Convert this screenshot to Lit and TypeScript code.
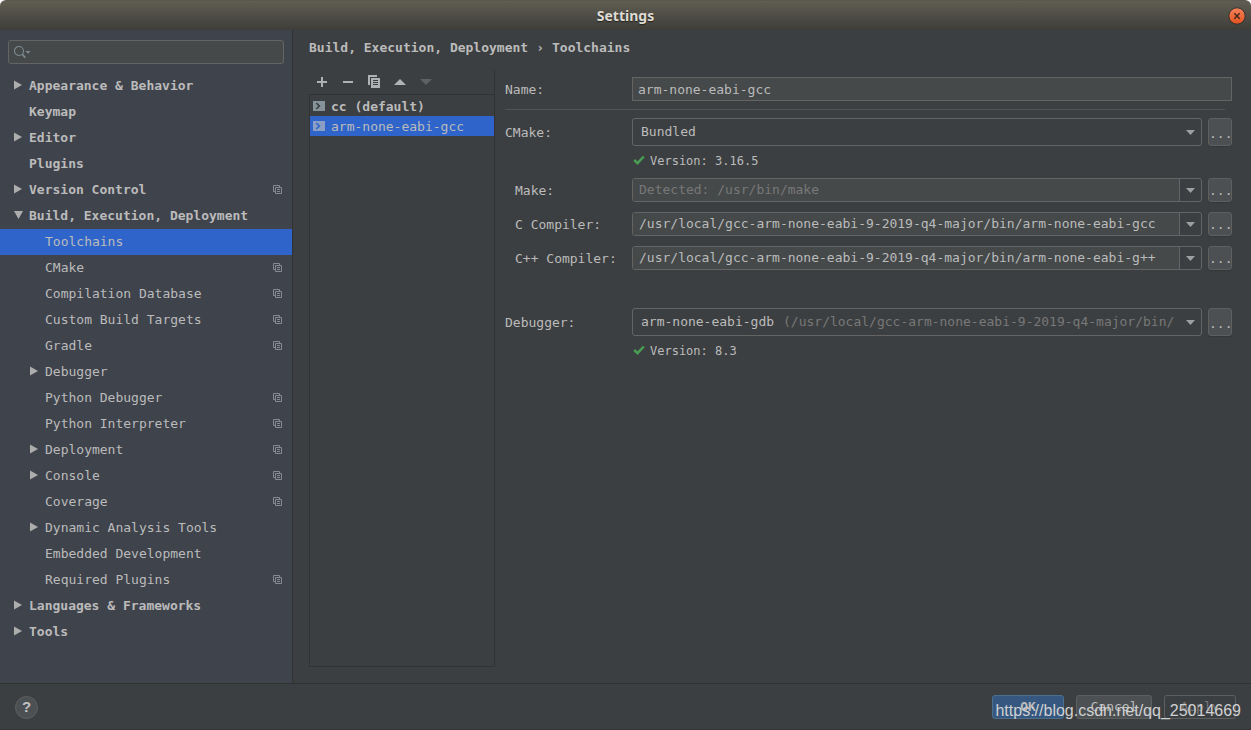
import { LitElement, html, css, svg, nothing } from "lit";
import { customElement, state } from "lit/decorators.js";
import { classMap } from "lit/directives/class-map.js";

interface TreeItem {
  label: string;
  level: 0 | 1;
  arrow?: "right" | "down";
  project?: boolean;
}

const TREE: TreeItem[] = [
  { label: "Appearance & Behavior", level: 0, arrow: "right" },
  { label: "Keymap", level: 0 },
  { label: "Editor", level: 0, arrow: "right" },
  { label: "Plugins", level: 0 },
  { label: "Version Control", level: 0, arrow: "right", project: true },
  { label: "Build, Execution, Deployment", level: 0, arrow: "down" },
  { label: "Toolchains", level: 1 },
  { label: "CMake", level: 1, project: true },
  { label: "Compilation Database", level: 1, project: true },
  { label: "Custom Build Targets", level: 1, project: true },
  { label: "Gradle", level: 1, project: true },
  { label: "Debugger", level: 1, arrow: "right" },
  { label: "Python Debugger", level: 1, project: true },
  { label: "Python Interpreter", level: 1, project: true },
  { label: "Deployment", level: 1, arrow: "right", project: true },
  { label: "Console", level: 1, arrow: "right", project: true },
  { label: "Coverage", level: 1, project: true },
  { label: "Dynamic Analysis Tools", level: 1, arrow: "right" },
  { label: "Embedded Development", level: 1 },
  { label: "Required Plugins", level: 1, project: true },
  { label: "Languages & Frameworks", level: 0, arrow: "right" },
  { label: "Tools", level: 0, arrow: "right" },
];

const icon = (w: number, h: number, body: unknown) =>
  html`<svg width=${w} height=${h} viewBox="0 0 ${w} ${h}" aria-hidden="true">${body}</svg>`;

const searchIcon = icon(17, 14, svg`
  <circle cx="5" cy="6" r="4.5" fill="none" stroke="#7f8b91" stroke-width="1.1"/>
  <path d="M8.200 9.200L11.200 12.600" stroke="#7f8b91" stroke-width="1.600"/>
  <path d="M11.500 6h5l-2.500 2.800z" fill="#7f8b91"/>`);
const arrowRight = icon(10, 10, svg`<path d="M1 0.500v9l8-4.500z" fill="#adadad"/>`);
const arrowDown = icon(10, 10, svg`<path d="M1 1h9L5.500 9z" fill="#adadad"/>`);
const projectIcon = icon(9, 9, svg`
  <path d="M2 6.500H0.500V0.500H6.500V2" fill="none" stroke="#848b94"/>
  <path d="M2.500 2.500h6v6h-6zM4 4.500h3M4 6.500h3" fill="none" stroke="#848b94"/>`);
const addIcon = icon(12, 12, svg`<path d="M6 1v10M1 6h10" stroke="#afb1b3" stroke-width="2"/>`);
const removeIcon = icon(12, 12, svg`<path d="M1 6h10" stroke="#afb1b3" stroke-width="2"/>`);
const copyIcon = icon(12, 14, svg`
  <path d="M0 0h9v2H2v8H0z" fill="#afb1b3"/>
  <path d="M3 3h9v10H3z" fill="#afb1b3"/>
  <path d="M5 5.500h5M5 7.500h5M5 9.500h5" stroke="#3c3f41"/>`);
const upIcon = icon(12, 12, svg`<path d="M0 9h12L6 3z" fill="#afb1b3"/>`);
const downIcon = icon(12, 12, svg`<path d="M0 3h12L6 9z" fill="#5e6163"/>`);
const comboArrow = icon(9, 5, svg`<path d="M0 0h9L4.500 5z" fill="#9da0a3"/>`);
const terminalIcon = (fill: string, mark: string) => icon(12, 10, svg`
  <path d="M0 0h12v10H0z" fill=${fill}/>
  <path d="M3.300 2l3 3-3 3" fill="none" stroke=${mark} stroke-width="1.700"/>`);
const checkIcon = icon(12, 10, svg`
  <path d="M1.200 5l3.300 3.200L10.800 1.500" fill="none" stroke="#499c54" stroke-width="2.500"/>`);
const closeIcon = icon(18, 18, svg`
  <defs><linearGradient id="orb" x1="0" y1="0" x2="0" y2="1">
    <stop offset="0" stop-color="#f6835c"/><stop offset="1" stop-color="#e2511d"/>
  </linearGradient></defs>
  <circle cx="9" cy="9" r="8.200" fill="url(#orb)" stroke="#33322e"/>
  <path d="M6.300 6.300l5.400 5.400M11.700 6.300l-5.400 5.400" stroke="#40261b" stroke-width="1.400"/>`);

@customElement("app-root")
export class AppRoot extends LitElement {
  @state() private page = "Toolchains";
  @state() private toolchain = "arm-none-eabi-gcc";

  static styles = css`
    :host {
      display: flex;
      flex-direction: column;
      height: 100vh;
      box-sizing: border-box;
      overflow: hidden;
      color: #bbbbbb;
      background: #ffffff;
      font: 13px/20px "DejaVu Sans Mono", monospace;
    }
    *, *::before, *::after { box-sizing: border-box; }
    svg { display: block; flex: none; }
    button, input, select { font: inherit; color: inherit; margin: 0; padding: 0; outline: none; }
    button { cursor: pointer; }
    ul { list-style: none; margin: 0; padding: 0; }

    .titlebar {
      display: grid;
      grid-template-columns: 1fr auto 1fr;
      align-items: center;
      flex: none;
      height: 30px;
      padding: 0 5px;
      border-top: 1px solid #5a584e;
      border-radius: 6px 6px 0 0;
      background: linear-gradient(#605e52, #3e3d39);
    }
    .titlebar h1 {
      grid-column: 2;
      margin: 0;
      color: #dfdbd2;
      font: bold 14px/20px "Noto Sans", "Open Sans", sans-serif;
      text-shadow: 0 1px 1px #22221f;
    }
    .close { justify-self: end; border: 0; background: none; }

    .body { display: flex; flex: 1; min-height: 0; background: #3c3f41; }
    .sidebar {
      display: flex;
      flex-direction: column;
      flex: none;
      width: 293px;
      padding-top: 10px;
      gap: 9px;
      border-right: 1px solid #323232;
      background: #3f434c;
    }
    .search {
      display: flex;
      align-items: center;
      gap: 4px;
      height: 24px;
      margin: 0 8px;
      padding: 0 5px;
      border: 1px solid #646464;
      border-radius: 3px;
      background: #45494a;
    }
    .search input { flex: 1; min-width: 0; border: 0; background: none; }
    .node {
      display: flex;
      align-items: center;
      width: 100%;
      height: 26px;
      padding: 0 10px 2px 13px;
      border: 0;
      background: none;
      text-align: left;
      white-space: nowrap;
    }
    .node.child { padding-left: 29px; }
    .node.top { font-weight: bold; }
    .node.selected { background: #2f65ca; }
    .twist { flex: none; width: 16px; }
    .node .text { flex: 1; }
    .node .text, .chain span, .row label, .version span { padding-top: 2px; }

    .content { display: flex; flex-direction: column; flex: 1; min-width: 0; padding: 8px 19px 16px 16px; }
    .crumbs { display: flex; gap: 8px; margin: 0 0 12px; font: inherit; font-weight: bold; }
    .columns { display: flex; flex: 1; gap: 10px; min-height: 0; }
    .chains { display: flex; flex-direction: column; flex: none; width: 186px; border-right: 1px solid #323232; }
    .tools { display: flex; align-items: center; gap: 14px; height: 24px; padding-left: 7px; }
    .tools button { border: 0; background: none; }
    .list { flex: 1; padding-top: 1px; border: 1px solid #323232; border-right: 0; }
    .chain {
      display: flex;
      align-items: center;
      gap: 6px;
      width: 100%;
      height: 20px;
      padding: 0 3px;
      border: 0;
      background: none;
      text-align: left;
    }
    .chain.default { font-weight: bold; }
    .chain.selected { background: #2f65ca; }

    .form { flex: 1; min-width: 0; padding-top: 7px; }
    .row { display: flex; align-items: center; gap: 6px; }
    .row label { flex: none; width: 121px; }
    .row.sub label { padding-left: 10px; }
    .name {
      flex: 1;
      min-width: 0;
      height: 24px;
      padding: 0 5px;
      border: 1px solid #646464;
      background: #45494a;
    }
    .rule { height: 1px; margin: 8px 7px 8px 0; border: 0; background: #515355; }
    .combo {
      display: flex;
      align-items: center;
      flex: 1;
      min-width: 0;
      height: 28px;
      padding: 0 6px 0 8px;
      border: 1px solid #646464;
      border-radius: 3px;
    }
    .combo select { flex: none; appearance: none; border: 0; background: none; }
    .combo .hint { flex: 1; min-width: 0; padding-left: 8px; overflow: hidden; color: #787878; white-space: nowrap; }
    .combo svg { margin-left: 6px; }
    .combo.fill select { flex: 1; }
    .editable {
      display: flex;
      flex: 1;
      min-width: 0;
      height: 24px;
      border: 1px solid #646464;
      border-radius: 3px;
      overflow: hidden;
    }
    .editable input { flex: 1; min-width: 0; padding: 0 6px; border: 0; background: #45494a; }
    .editable input::placeholder { color: #787878; opacity: 1; }
    .editable button {
      display: grid;
      place-items: center;
      width: 22px;
      border: 0;
      border-left: 1px solid #646464;
      background: none;
    }
    .browse {
      flex: none;
      width: 24px;
      height: 24px;
      padding-top: 2px;
      border: 1px solid #5e6060;
      border-radius: 3px;
      background: #4c5052;
      box-shadow: 0 1px 1px #343638;
    }
    .browse.tall { height: 28px; padding-top: 4px; }
    .version {
      display: flex;
      align-items: center;
      gap: 5px;
      height: 20px;
      margin: 4px 0 8px 128px;
      font-size: 12px;
    }
    .sub { margin-bottom: 10px; }
    .debugger { margin-top: 38px; }

    .footer {
      display: flex;
      align-items: center;
      flex: none;
      gap: 12px;
      height: 47px;
      padding: 1px 15px 0;
      border-top: 1px solid #303233;
      border-bottom: 1px solid #323436;
      background: #3c3f41;
      position: relative;
    }
    .help {
      width: 23px;
      height: 23px;
      margin-right: auto;
      border: 1px solid #5e6060;
      border-radius: 50%;
      background: #4c5052;
      color: #bfc1c3;
      font: bold 15px/20px "Liberation Sans", sans-serif;
    }
    .action {
      width: 72px;
      height: 24px;
      border: 1px solid #5e6060;
      border-radius: 3px;
      background: #4c5052;
    }
    .action.wide { width: 76px; }
    .action.primary { border-color: #4c708c; background: #365880; font-weight: bold; }
    .action:disabled { background: none; color: #777777; }
    .watermark {
      position: absolute;
      right: 10px;
      bottom: 8px;
      color: #d0d1d2;
      font: 16px/20px "Liberation Sans", sans-serif;
      pointer-events: none;
    }
  `;

  private renderNode(item: TreeItem) {
    const classes = {
      node: true,
      top: item.level === 0,
      child: item.level === 1,
      selected: item.label === this.page,
    };
    return html`<li>
      <button class=${classMap(classes)} @click=${() => (this.page = item.label)}>
        <span class="twist">${item.arrow === "right" ? arrowRight : item.arrow === "down" ? arrowDown : nothing}</span>
        <span class="text">${item.label}</span>
        ${item.project ? projectIcon : nothing}
      </button>
    </li>`;
  }

  private renderChain(name: string, label: string, isDefault: boolean) {
    const selected = name === this.toolchain;
    return html`<li>
      <button
        class=${classMap({ chain: true, default: isDefault, selected })}
        @click=${() => (this.toolchain = name)}
      >
        ${selected ? terminalIcon("#8b9fc4", "#2f65ca") : terminalIcon("#87939a", "#3c3f41")}
        <span>${label}</span>
      </button>
    </li>`;
  }

  private renderPath(id: string, label: string, value: string, placeholder = "") {
    return html`<div class="row sub">
      <label for=${id}>${label}</label>
      <div class="editable">
        <input id=${id} type="text" .value=${value} placeholder=${placeholder} />
        <button aria-label="Show options">${comboArrow}</button>
      </div>
      <button class="browse" aria-label="Browse">...</button>
    </div>`;
  }

  render() {
    return html`
      <header class="titlebar">
        <h1>Settings</h1>
        <button class="close" aria-label="Close">${closeIcon}</button>
      </header>
      <div class="body">
        <nav class="sidebar">
          <div class="search">${searchIcon}<input type="text" aria-label="Search settings" /></div>
          <ul>${TREE.map((item) => this.renderNode(item))}</ul>
        </nav>
        <main class="content">
          <h2 class="crumbs"><span>Build, Execution, Deployment</span><span>›</span><span>Toolchains</span></h2>
          <div class="columns">
            <section class="chains">
              <div class="tools">
                <button aria-label="Add">${addIcon}</button>
                <button aria-label="Remove">${removeIcon}</button>
                <button aria-label="Copy">${copyIcon}</button>
                <button aria-label="Move up">${upIcon}</button>
                <button aria-label="Move down" disabled>${downIcon}</button>
              </div>
              <ul class="list">
                ${this.renderChain("cc", "cc (default)", true)}
                ${this.renderChain("arm-none-eabi-gcc", "arm-none-eabi-gcc", false)}
              </ul>
            </section>
            <section class="form">
              <div class="row">
                <label for="name">Name:</label>
                <input class="name" id="name" type="text" .value=${this.toolchain} />
              </div>
              <hr class="rule" />
              <div class="row">
                <label for="cmake">CMake:</label>
                <div class="combo fill">
                  <select id="cmake"><option>Bundled</option></select>
                  ${comboArrow}
                </div>
                <button class="browse tall" aria-label="Browse">...</button>
              </div>
              <div class="version">${checkIcon}<span>Version: 3.16.5</span></div>
              ${this.renderPath("make", "Make:", "", "Detected: /usr/bin/make")}
              ${this.renderPath("cc", "C Compiler:", "/usr/local/gcc-arm-none-eabi-9-2019-q4-major/bin/arm-none-eabi-gcc")}
              ${this.renderPath("cxx", "C++ Compiler:", "/usr/local/gcc-arm-none-eabi-9-2019-q4-major/bin/arm-none-eabi-g++")}
              <div class="row debugger">
                <label for="gdb">Debugger:</label>
                <div class="combo">
                  <select id="gdb"><option>arm-none-eabi-gdb</option></select>
                  <span class="hint">(/usr/local/gcc-arm-none-eabi-9-2019-q4-major/bin/</span>
                  ${comboArrow}
                </div>
                <button class="browse tall" aria-label="Browse">...</button>
              </div>
              <div class="version">${checkIcon}<span>Version: 8.3</span></div>
            </section>
          </div>
        </main>
      </div>
      <footer class="footer">
        <button class="help" aria-label="Help">?</button>
        <button class="action primary">OK</button>
        <button class="action wide">Cancel</button>
        <button class="action" disabled>Apply</button>
        <span class="watermark">https://blog.csdn.net/qq_25014669</span>
      </footer>
    `;
  }
}
